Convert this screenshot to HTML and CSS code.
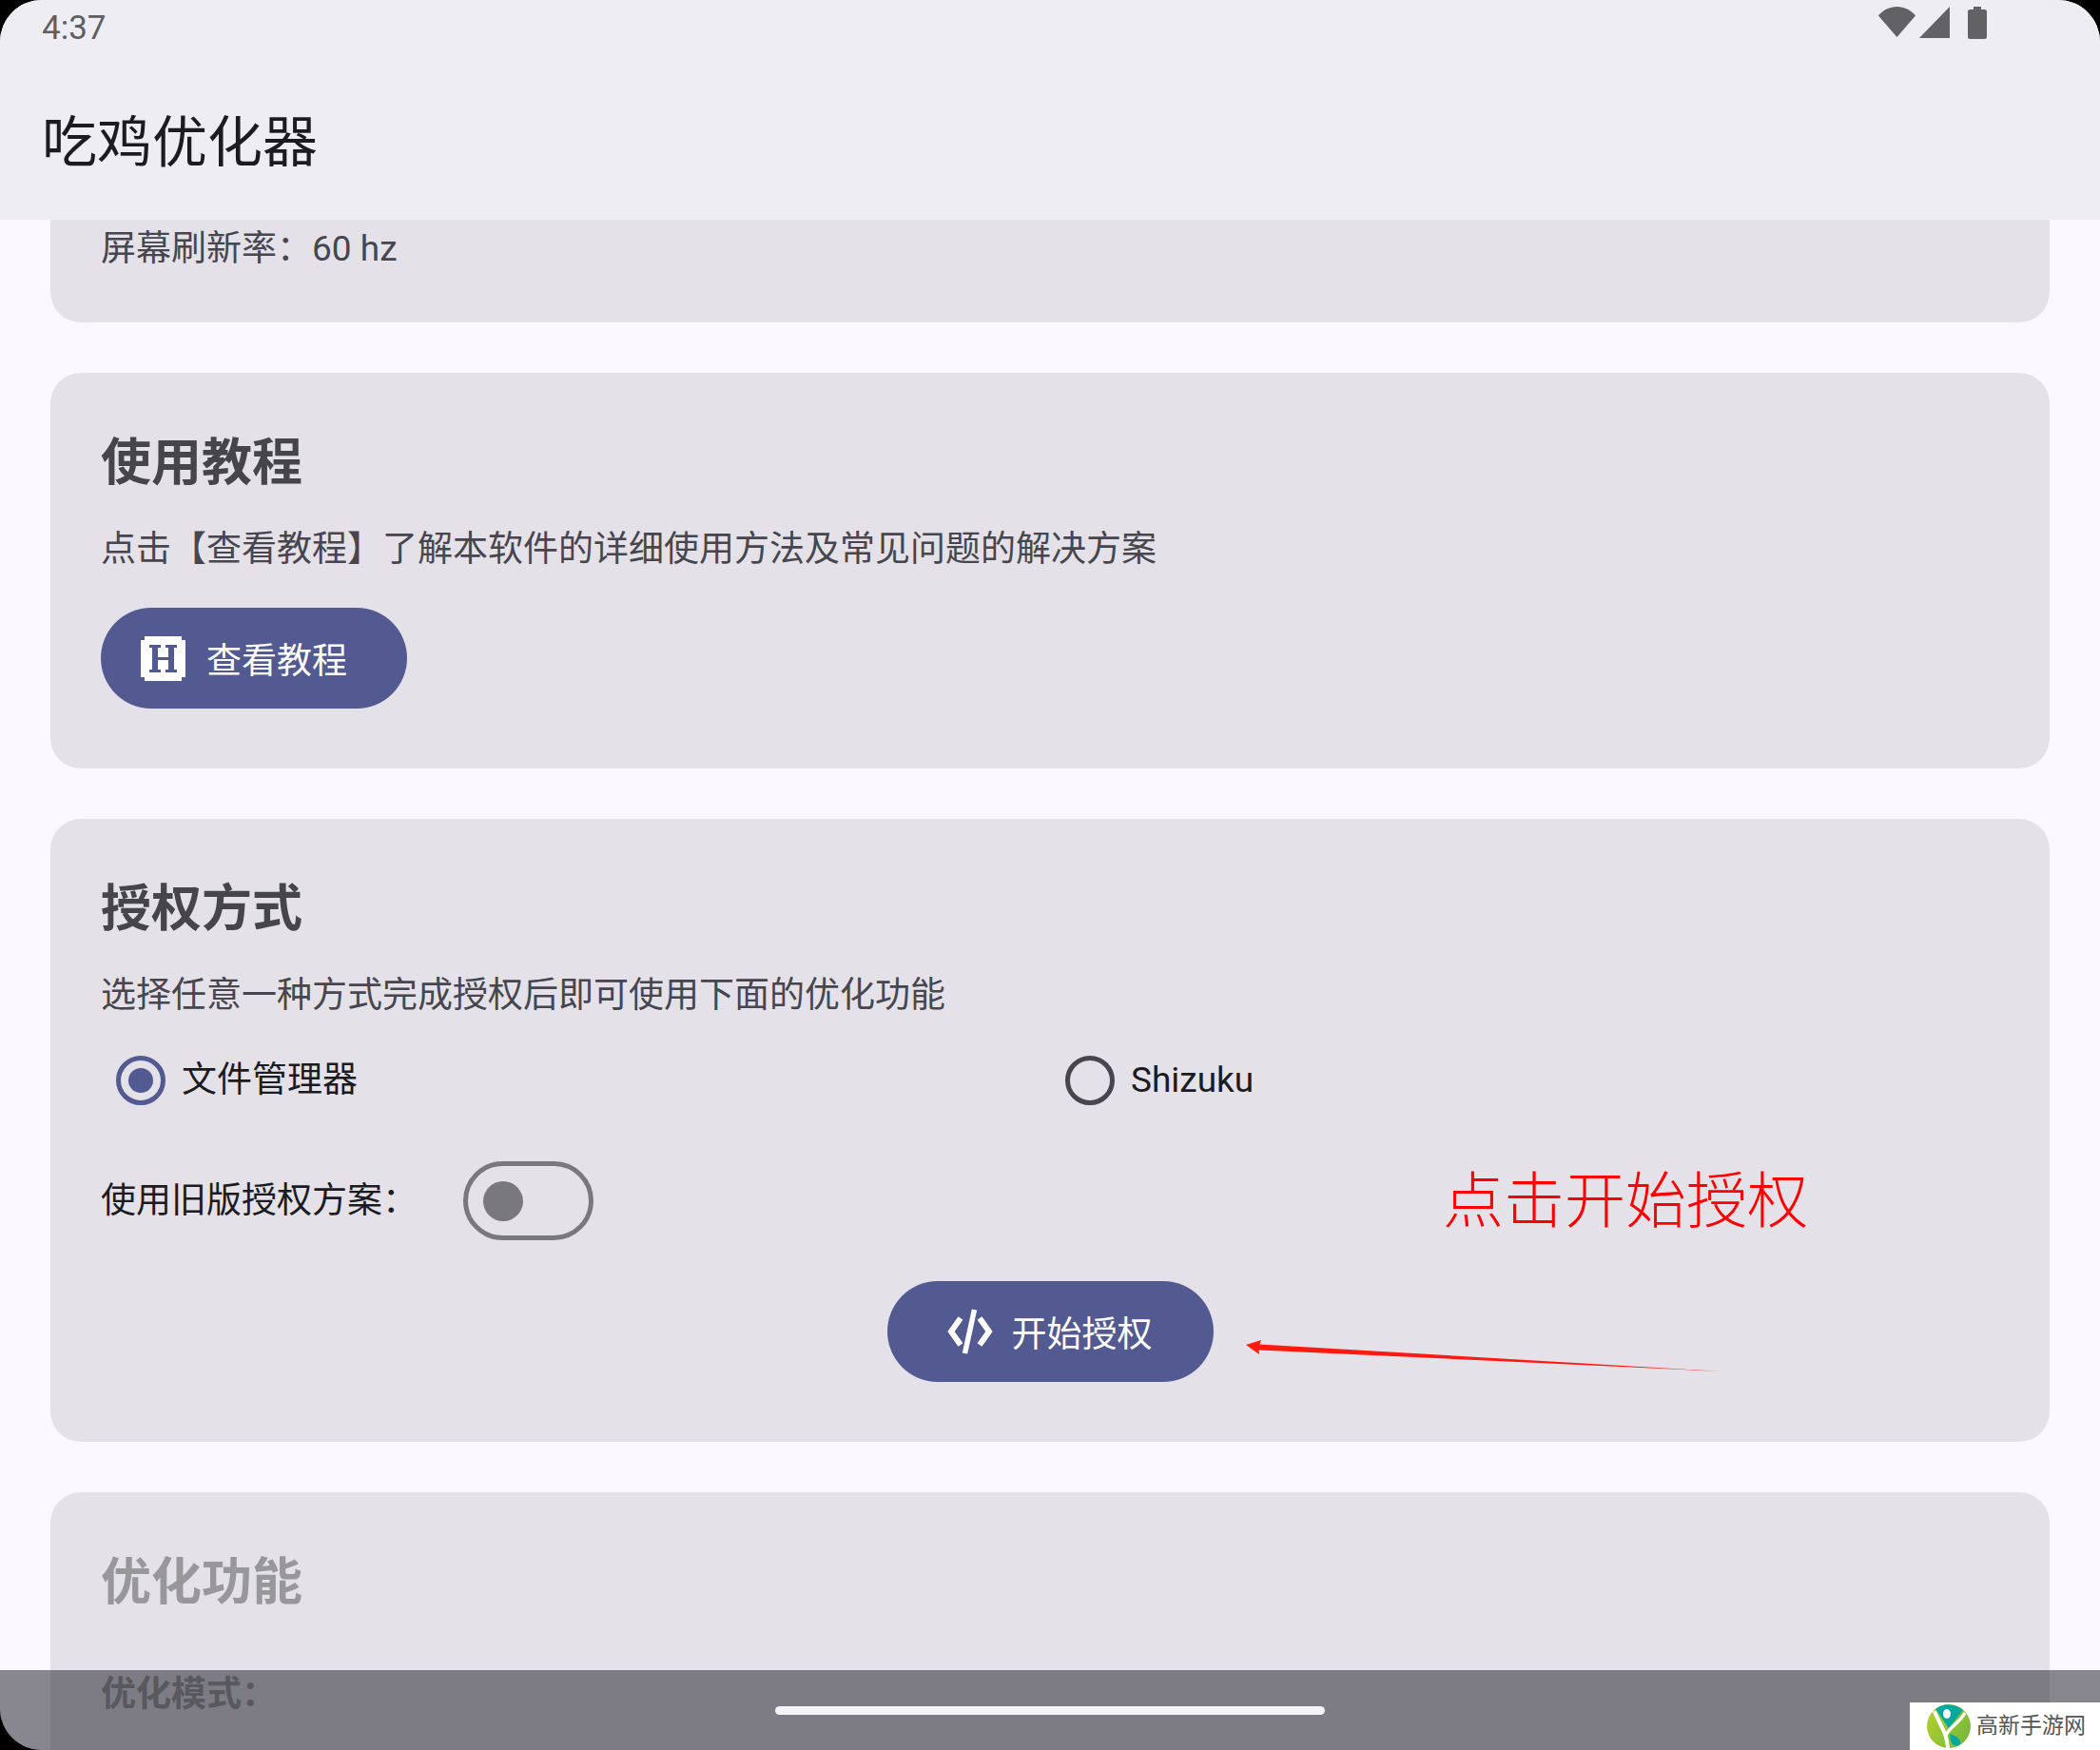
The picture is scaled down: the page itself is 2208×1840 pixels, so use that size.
FILE: index.html
```html
<!DOCTYPE html>
<html lang="zh-CN">
<head>
<meta charset="utf-8">
<title>吃鸡优化器</title>
<link rel="stylesheet" href="styles.css">
</head>
<body>
<div class="root">
  <div class="screen">
    <header class="appbar">
      <div class="status">
        <span class="time">4:37</span>
        <div class="status-icons">
          <svg class="ic-wifi" width="39" height="32" viewBox="0 0 39 32"><path d="M0 9.5C5 3.5 12 0 19.500 0S34 3.500 39 9.500L19.500 32Z"/></svg>
          <svg class="ic-signal" width="32" height="33" viewBox="0 0 32 33"><path d="M32 0V33H0Z"/></svg>
          <svg class="ic-batt" width="20" height="34" viewBox="0 0 20 34"><path d="M6 0H14V3H18C19 3 20 4 20 5V32C20 33 19 34 18 34H2C1 34 0 33 0 32V5C0 4 1 3 2 3H6Z"/></svg>
        </div>
      </div>
      <h1 class="title">吃鸡优化器</h1>
    </header>
    <main class="content">
      <section class="card card-cut">
        <p class="desc">屏幕刷新率：60 hz</p>
      </section>
      <section class="card">
        <h2 class="heading">使用教程</h2>
        <p class="desc desc-after">点击【查看教程】了解本软件的详细使用方法及常见问题的解决方案</p>
        <div class="btn-row">
          <button class="btn btn-tutorial">
            <svg class="btn-icon" width="47" height="47" viewBox="0 0 47 47"><path fill="#fff" d="M4 0H43V4H47V43H43V47H4V43H0V4H4Z"/><path fill="#525a91" d="M9 9H21V12H18V22H29V12H26V9H38V12H35V35H38V38H26V35H29V25H18V35H21V38H9V35H12V12H9Z"/></svg>
            <span>查看教程</span>
          </button>
        </div>
      </section>
      <section class="card">
        <h2 class="heading">授权方式</h2>
        <p class="desc desc-after">选择任意一种方式完成授权后即可使用下面的优化功能</p>
        <div class="radios">
          <label class="radio-item"><span class="radio radio-on"></span><span class="opt">文件管理器</span></label>
          <label class="radio-item"><span class="radio"></span><span class="opt">Shizuku</span></label>
        </div>
        <div class="switch-row">
          <span class="opt">使用旧版授权方案：</span>
          <span class="switch"><span class="thumb"></span></span>
        </div>
        <div class="btn-row btn-row-center">
          <button class="btn btn-auth">
            <svg class="btn-icon" width="48" height="48" viewBox="0 0 48 48" fill="none" stroke="#fff" stroke-width="6"><path d="M14 10 4 24 14 38"/><path d="M34 10 44 24 34 38"/><path d="M28.500 1 18.500 47" stroke-width="5.500"/></svg>
            <span>开始授权</span>
          </button>
        </div>
      </section>
      <section class="card card-disabled">
        <h2 class="heading">优化功能</h2>
        <p class="desc mode">优化模式：</p>
      </section>
    </main>
    <div class="navbar"><span class="handle"></span></div>
    <div class="note">点击开始授权</div>
    <svg class="arrow" width="500" height="34" viewBox="0 0 500 34"><path fill="#ff1a10" d="M0 5 16 0 14.500 4.500 500 33 13.500 10.500 14 15Z"/></svg>
  </div>
  <aside class="mark">
    <svg width="46" height="46" viewBox="0 0 46 46">
      <defs><linearGradient id="lg" x1="0" y1="0.2" x2="1" y2="0.8"><stop offset="0" stop-color="#b2d02c"/><stop offset="1" stop-color="#76b83c"/></linearGradient></defs>
      <circle cx="23" cy="23" r="23" fill="url(#lg)"/>
      <path fill="#00a99d" d="M9 5C17-2 30-1 38 6L23 25Z"/>
      <ellipse cx="21" cy="10" rx="4" ry="5" fill="#fff"/>
      <path fill="none" stroke="#fff" stroke-width="4" d="M8 7C12 20 21 28 22 46"/>
      <path fill="none" stroke="#fff" stroke-width="3.500" d="M40 9C34 20 23 24 19 34"/>
      <path fill="#00a99d" d="M24 31C31 33 38 38 34 43 29 46 24 41 24 31Z"/>
    </svg>
    <span class="mark-text">高新手游网</span>
  </aside>
</div>
</body>
</html>
```
FILE: styles.css
```css
* { box-sizing: border-box; }
html, body { margin: 0; padding: 0; background: #000; }
body { font-family: Roboto, "Noto Sans CJK SC", sans-serif; }
.root { position: relative; width: 2208px; height: 1840px; overflow: hidden; }
.screen { position: relative; width: 2208px; height: 1840px; overflow: hidden; border-radius: 44px; background: #fbf8ff; }

.appbar { height: 231px; background: #eeedf3; padding: 0 44px; display: flex; flex-direction: column; }
.status { height: 60px; display: flex; align-items: center; justify-content: space-between; padding-right: 75px; }
.time { font-size: 35px; line-height: 60px; color: #5f5f63; }
.status-icons { display: flex; align-items: flex-start; padding-top: 0; height: 48px; margin-top: 2px; }
.status-icons svg { fill: #626266; display: block; }
.ic-signal { margin-left: 4px; }
.ic-batt { margin-left: 19px; }
.title { margin: 55px 0 0; font-size: 58px; line-height: 70px; font-weight: 400; color: #1b1b21; }

.content { padding: 0 53px; display: flex; flex-direction: column; gap: 53px; }
.card { background: #e4e2e8; border-radius: 32px; padding: 63px 53px; }
.card-cut { border-radius: 0 0 32px 32px; padding: 6px 53px 52px; }
.heading { margin: 0; font-size: 53px; line-height: 64px; font-weight: 700; color: #46454c; }
.desc { margin: 0; font-size: 37px; line-height: 50px; color: #47464f; }
.desc-after { margin-top: 34px; }
.btn-row { display: flex; margin-top: 36px; }
.btn-row-center { justify-content: center; margin-top: 43px; }
.btn { height: 106px; border: 0; border-radius: 53px; background: #525a91; color: #fff; display: flex; align-items: center; font: inherit; font-size: 37px; padding: 0; }
.btn-icon { display: block; flex: none; }
.btn-tutorial { width: 322px; padding-left: 42px; gap: 22px; }
.btn-auth { width: 343px; padding-left: 63px; gap: 20px; }

.radios { display: grid; grid-template-columns: 1fr 1fr; margin-top: 32px; }
.radio-item { display: flex; align-items: center; height: 64px; padding-left: 16px; gap: 17px; }
.radio { width: 52px; height: 52px; border-radius: 50%; border: 5px solid #47464f; display: flex; align-items: center; justify-content: center; flex: none; }
.radio-on { border-color: #525a91; }
.radio-on::after { content: ""; width: 26px; height: 26px; border-radius: 50%; background: #525a91; }
.opt { font-size: 37px; line-height: 50px; color: #1b1b21; }

.switch-row { display: flex; align-items: center; gap: 48px; margin-top: 53px; height: 83px; }
.switch { width: 137px; height: 83px; border: 5px solid #79787f; border-radius: 42px; display: flex; align-items: center; padding-left: 16px; }
.thumb { width: 42px; height: 42px; border-radius: 50%; background: #79787f; }

.card-disabled .heading, .card-disabled .desc { color: #98979c; }
.mode { margin-top: 61px; font-weight: 700; }

.navbar { position: absolute; left: 0; right: 0; bottom: 0; height: 84px; background: rgba(30, 30, 40, 0.52); display: flex; justify-content: center; padding-top: 38px; }
.handle { width: 578px; height: 9px; border-radius: 5px; background: #f4f3f8; }

.note { position: absolute; left: 1517px; top: 1220px; font-size: 64px; line-height: 88px; color: #ff0000; font-weight: 300; white-space: nowrap; }
.arrow { position: absolute; left: 1310px; top: 1409px; }

.mark { position: absolute; right: 0; bottom: 0; width: 200px; height: 50px; background: #fff; display: flex; align-items: center; padding-left: 18px; gap: 6px; }
.mark svg { display: block; flex: none; }
.mark-text { font-size: 23px; line-height: 50px; color: #555; white-space: nowrap; }
```
